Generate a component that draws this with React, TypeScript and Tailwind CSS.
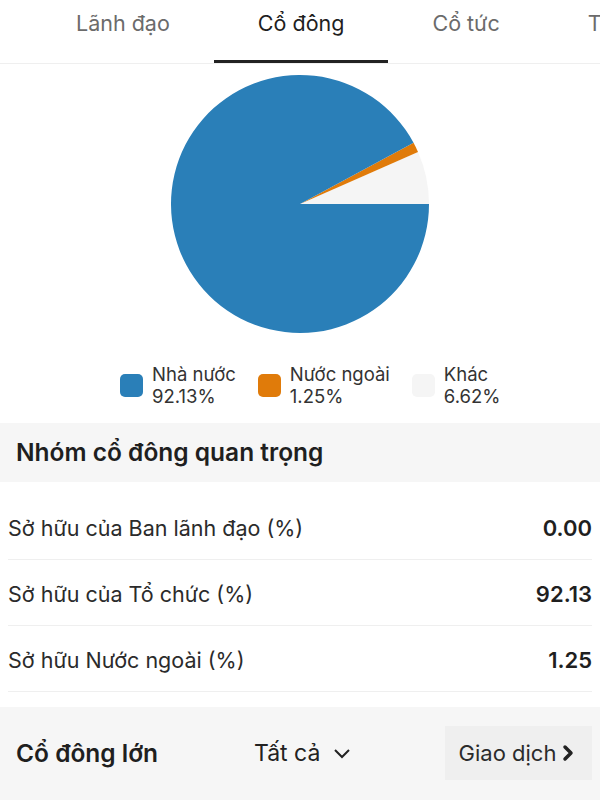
import React from 'react';

const tabs = ['Lãnh đạo', 'Cổ đông', 'Cổ tức', 'Tài chính'];

const slices = [
  { label: 'Nhà nước', value: 92.13, color: '#2a7fb8' },
  { label: 'Nước ngoài', value: 1.25, color: '#e07b0a' },
  { label: 'Khác', value: 6.62, color: '#f5f5f5' },
];

const rows = [
  { label: 'Sở hữu của Ban lãnh đạo (%)', value: '0.00' },
  { label: 'Sở hữu của Tổ chức (%)', value: '92.13' },
  { label: 'Sở hữu Nước ngoài (%)', value: '1.25' },
];

// draw slices counter-clockwise starting from 3 o'clock: Khác, Nước ngoài, Nhà nước
function Pie() {
  const cx = 130;
  const cy = 130;
  const r = 129;
  const order = [slices[2], slices[1], slices[0]];
  let start = 0;
  const pt = (deg: number) => {
    const a = (deg * Math.PI) / 180;
    return `${cx + r * Math.cos(a)} ${cy - r * Math.sin(a)}`;
  };
  return (
    <svg width="260" height="260" viewBox="0 0 260 260">
      {order.map(s => {
        const sweep = (s.value / 100) * 360;
        const end = start + sweep;
        const large = sweep > 180 ? 1 : 0;
        const d = `M ${cx} ${cy} L ${pt(start)} A ${r} ${r} 0 ${large} 0 ${pt(end)} Z`;
        start = end;
        return <path key={s.label} d={d} fill={s.color} />;
      })}
    </svg>
  );
}

export default function App() {
  return (
    <main className="w-[600px] h-[800px] overflow-hidden bg-white text-[#222] font-['Inter','Liberation_Sans',sans-serif]">
      <nav className="flex h-[64px] border-b border-[#efefef] overflow-hidden pl-[32px]">
        {tabs.map((t, i) => (
          <div
            key={t}
            className={
              'shrink-0 px-[44px] flex items-start pt-[7px] text-[21.5px] whitespace-nowrap ' +
              (i === 1 ? 'text-[#1f1f1f] border-b-[3px] border-[#222]' : 'text-[#6b6b6b]')
            }>
            {t}
          </div>
        ))}
      </nav>

      <section className="flex justify-center pt-[10px]">
        <Pie />
      </section>

      <div className="flex gap-[22px] mt-[29px] pl-[120px]">
        {slices.map(s => (
          <div key={s.label} className="flex items-center gap-[9px]">
            <span className="w-[23px] h-[23px] rounded-[5px]" style={{ background: s.color }} />
            <div className="text-[18.5px] leading-[22px] text-[#333]">
              <div>{s.label}</div>
              <div>{s.value.toFixed(2)}%</div>
            </div>
          </div>
        ))}
      </div>

      <h2 className="mt-[16px] h-[59px] bg-[#f6f6f6] flex items-center px-[16px] text-[24.5px] font-semibold text-[#1f1f1f]">
        Nhóm cổ đông quan trọng
      </h2>

      <div className="mt-[12px] px-[8px]">
        {rows.map(r => (
          <div key={r.label} className="h-[66px] flex items-center justify-between border-b border-[#efefef] pt-[4px]">
            <span className="text-[21.5px] text-[#2b2b2b]">{r.label}</span>
            <span className="text-[22px] font-semibold text-[#1f1f1f]">{r.value}</span>
          </div>
        ))}
      </div>

      <footer className="mt-[15px] h-[100px] bg-[#f6f6f6] flex items-center pl-[16px] pr-[8px] pb-[8px]">
        <span className="text-[24.5px] font-semibold text-[#1f1f1f] w-[238px]">Cổ đông lớn</span>
        <button className="flex items-center gap-[13px] text-[23px] text-[#222]">
          Tất cả
          <svg width="18" height="12" viewBox="0 0 18 12" fill="none" stroke="#222" strokeWidth="2">
            <path d="M2 3 L9 10 L16 3" />
          </svg>
        </button>
        <button className="ml-auto w-[147px] h-[54px] bg-[#efefef] flex items-center justify-center gap-[6px] pr-[4px] text-[22px] text-[#2b2b2b]">
          Giao dịch
          <svg width="12" height="18" viewBox="0 0 12 18" fill="none" stroke="#222" strokeWidth="3.5" strokeLinecap="round" strokeLinejoin="round">
            <path d="M3 3 L9 9 L3 15" />
          </svg>
        </button>
      </footer>
    </main>
  );
}
